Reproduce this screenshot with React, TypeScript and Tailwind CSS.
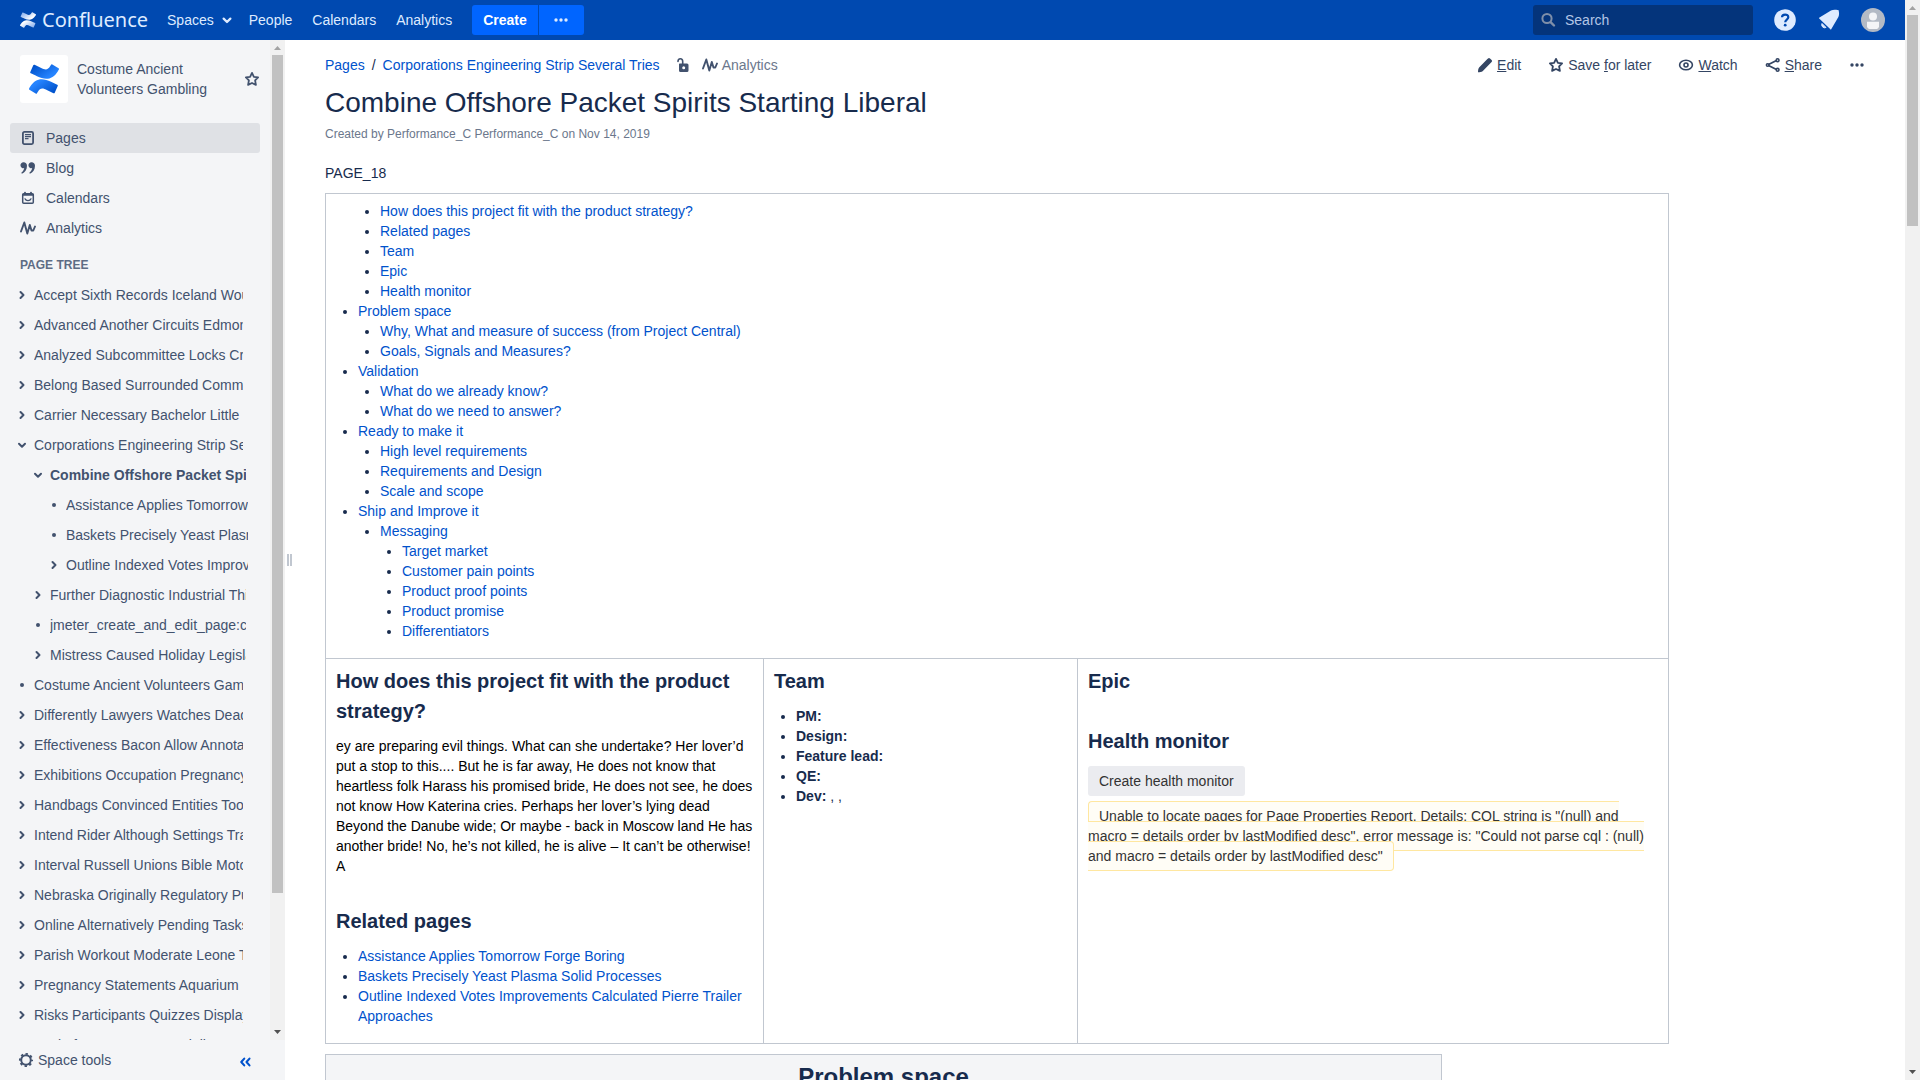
import React from "react";

type IconProps = { className?: string };

function ConfluenceMark({ id, from, to, className }: { id: string; from: string; to: string; className: string }) {
  return (
    <svg viewBox="0 0 24 24" className={className} aria-hidden="true">
      <defs>
        <linearGradient id={id + "a"} x1="0" y1="0.3" x2="0.7" y2="0.8">
          <stop offset="0" stopColor={from} />
          <stop offset="1" stopColor={to} />
        </linearGradient>
        <linearGradient id={id + "b"} x1="1" y1="0.7" x2="0.3" y2="0.2">
          <stop offset="0" stopColor={from} />
          <stop offset="1" stopColor={to} />
        </linearGradient>
      </defs>
      <path
        fill={`url(#${id}b)`}
        d="M.87 18.257c-.248.382-.53.875-.763 1.245a.764.764 0 0 0 .255 1.04l4.965 3.054a.764.764 0 0 0 1.058-.26c.199-.332.454-.763.733-1.221 1.967-3.247 3.945-2.853 7.508-1.146l4.957 2.337a.764.764 0 0 0 1.028-.382l2.364-5.346a.764.764 0 0 0-.382-1a599.851 599.851 0 0 1-4.965-2.361C10.911 10.97 5.224 11.185.87 18.257z"
      />
      <path
        fill={`url(#${id}a)`}
        d="M23.131 5.743c.249-.405.531-.875.764-1.25a.764.764 0 0 0-.256-1.034L18.675.404a.764.764 0 0 0-1.058.26c-.195.335-.451.763-.734 1.225-1.966 3.246-3.945 2.85-7.508 1.146L4.437.694a.764.764 0 0 0-1.027.382L1.046 6.422a.764.764 0 0 0 .382 1c1.039.49 3.105 1.467 4.965 2.361 6.698 3.246 12.392 3.029 16.738-4.04z"
      />
    </svg>
  );
}

function Svg({ className = "h-4 w-4", children }: { className?: string; children: React.ReactNode }) {
  return (
    <svg viewBox="0 0 16 16" className={className + " shrink-0"} fill="none" stroke="currentColor" strokeWidth="2" strokeLinecap="round" strokeLinejoin="round" aria-hidden="true">
      {children}
    </svg>
  );
}

const ChevronRight = ({ className }: IconProps) => <Svg className={className}><path d="M6.5 5l3 3-3 3" /></Svg>;
const ChevronDown = ({ className }: IconProps) => <Svg className={className}><path d="M5 6.8l3 3 3-3" /></Svg>;
const Dot = ({ className }: IconProps) => <Svg className={className}><circle cx="8" cy="8" r="2" fill="currentColor" stroke="none" /></Svg>;
const Star = ({ className }: IconProps) => (
  <Svg className={className}>
    <path strokeWidth="1.8" d="M8 1.9l1.9 3.9 4.2.6-3 3 .8 4.5L8 12l-3.900 1.900.8-4.500-3-3 4.200-.6z" />
  </Svg>
);
const Dots = ({ className }: IconProps) => (
  <Svg className={className}>
    <g fill="currentColor" stroke="none"><circle cx="3" cy="8" r="1.700" /><circle cx="8" cy="8" r="1.700" /><circle cx="13" cy="8" r="1.700" /></g>
  </Svg>
);
const Pulse = ({ className }: IconProps) => (
  <Svg className={className}>
    <path strokeWidth="1.900" d="M1 11.500L4.300 2.500l3 11 2.500-8.500 1.700 5.500 1.800 0L15 6.500" />
  </Svg>
);
const PageIcon = () => (
  <Svg>
    <rect x="2.900" y="1.900" width="10.200" height="12.200" rx="1.500" strokeWidth="1.800" />
    <path strokeWidth="1.200" strokeLinecap="butt" d="M5 4.700h6M5 6.700h6M5 8.700h3.500" />
  </Svg>
);
const Quote = () => (
  <Svg>
    <g fill="currentColor" stroke="none">
      <path d="M3.600 2.200a3 3 0 1 0 .6 5.900C4 10 3 11.600 1.300 12.800l.6 1C5 12.600 7 9.500 7 5.800 7 3.600 5.500 2.200 3.600 2.200z" />
      <path d="M11.600 2.200a3 3 0 1 0 .6 5.900c-.2 1.900-1.200 3.500-2.900 4.700l.6 1c3.100-1.200 5.100-4.300 5.100-8 0-2.200-1.500-3.600-3.400-3.600z" />
    </g>
  </Svg>
);
const CalendarIcon = () => (
  <Svg>
    <rect x="2.700" y="3.700" width="10.600" height="9.600" rx="1" strokeWidth="1.500" />
    <path d="M3 4.700h10M5 2.800v1M11 2.800v1" strokeWidth="1.900" />
    <path strokeWidth="1.300" d="M5 8.800c1 2.400 5 2.400 6 0" />
  </Svg>
);
const Unlock = () => (
  <Svg>
    <path fill="currentColor" stroke="none" fillRule="evenodd" d="M5.500 6.500h7.500a1.500 1.500 0 0 1 1.500 1.500v5.500A1.500 1.500 0 0 1 13 15H6.500A1.500 1.500 0 0 1 5 13.500V7zM9.700 9.200a1.500 1.500 0 1 0 0 3 1.500 1.500 0 0 0 0-3z" />
    <path strokeWidth="1.600" d="M4 4.500C4 .9 8.700.9 8.700 4.500v2.500" />
  </Svg>
);
const Pencil = () => (
  <Svg>
    <path fill="currentColor" stroke="none" d="M9.900 2.400l1.100-1a1.400 1.400 0 0 1 2 0l1.600 1.600a1.400 1.400 0 0 1 0 2l-1 1.100-8 8.100c-1 .9-2.800 1-4.600 1.100.1-1.900.2-3.700 1.100-4.700z" />
  </Svg>
);
const Eye = () => (
  <Svg>
    <ellipse cx="8" cy="8" rx="6.400" ry="4.800" strokeWidth="1.600" />
    <circle cx="8" cy="8" r="2" strokeWidth="1.600" />
  </Svg>
);
const ShareIcon = () => (
  <Svg>
    <path strokeWidth="1.700" d="M4 7.300l7-3.500M4 8.700l7 3.500" />
    <g strokeWidth="1.600"><circle cx="2.700" cy="8" r="1.300" /><circle cx="12.600" cy="3.200" r="1.400" /><circle cx="12.600" cy="12.800" r="1.400" /></g>
  </Svg>
);
const Gear = () => (
  <Svg>
    <circle cx="8" cy="8" r="4.800" strokeWidth="2" />
    <circle cx="8" cy="8" r="6.100" strokeWidth="1.900" strokeLinecap="butt" strokeDasharray="2.400 2.391" strokeDashoffset="1.200" />
  </Svg>
);

function ScrollBar({ thumb }: { thumb: string }) {
  return (
    <div className="flex w-[15px] shrink-0 flex-col items-center bg-[#f1f1f1]" aria-hidden="true">
      <svg viewBox="0 0 15 15" className="h-[15px] w-[15px] shrink-0"><path fill="#a3a3a3" d="M4 10h7L7.500 6z" /></svg>
      <div className={"w-[11px] bg-[#c1c1c1] " + thumb} />
      <svg viewBox="0 0 15 15" className="mt-auto h-[15px] w-[15px] shrink-0"><path fill="#505050" d="M4 5h7L7.500 9z" /></svg>
    </div>
  );
}

type Node = { text: string; icon: "right" | "down" | "dot"; level?: 1 | 2; current?: boolean };

const tree: Node[] = [
  { text: "Accept Sixth Records Iceland Would", icon: "right" },
  { text: "Advanced Another Circuits Edmonton", icon: "right" },
  { text: "Analyzed Subcommittee Locks Creek", icon: "right" },
  { text: "Belong Based Surrounded Commands", icon: "right" },
  { text: "Carrier Necessary Bachelor Little", icon: "right" },
  { text: "Corporations Engineering Strip Several Tries", icon: "down" },
  { text: "Combine Offshore Packet Spirits Starting Liberal", icon: "down", level: 1, current: true },
  { text: "Assistance Applies Tomorrow Forge Boring", icon: "dot", level: 2 },
  { text: "Baskets Precisely Yeast Plasma Solid Processes", icon: "dot", level: 2 },
  { text: "Outline Indexed Votes Improvements Calculated", icon: "right", level: 2 },
  { text: "Further Diagnostic Industrial Things", icon: "right", level: 1 },
  { text: "jmeter_create_and_edit_page:create", icon: "dot", level: 1 },
  { text: "Mistress Caused Holiday Legislation", icon: "right", level: 1 },
  { text: "Costume Ancient Volunteers Gambling", icon: "dot" },
  { text: "Differently Lawyers Watches Dead", icon: "right" },
  { text: "Effectiveness Bacon Allow Annotation", icon: "right" },
  { text: "Exhibitions Occupation Pregnancy", icon: "right" },
  { text: "Handbags Convinced Entities Tools", icon: "right" },
  { text: "Intend Rider Although Settings Travel", icon: "right" },
  { text: "Interval Russell Unions Bible Motors", icon: "right" },
  { text: "Nebraska Originally Regulatory Pump", icon: "right" },
  { text: "Online Alternatively Pending Tasks", icon: "right" },
  { text: "Parish Workout Moderate Leone Tom", icon: "right" },
  { text: "Pregnancy Statements Aquarium", icon: "right" },
  { text: "Risks Participants Quizzes Display", icon: "right" },
  { text: "Scale for Customers Socialist", icon: "right" },
];

const indent = { 0: "pl-[14px] pr-[27px]", 1: "pl-[30px] pr-6", 2: "pl-[46px] pr-[22px]" };
const treeIcons = { right: ChevronRight, down: ChevronDown, dot: Dot };

function TreeRow({ node }: { node: Node }) {
  const Icon = treeIcons[node.icon];
  return (
    <li className={"flex h-[30px] items-center gap-1 " + indent[node.level ?? 0]}>
      {node.icon === "dot" ? (
        <Icon />
      ) : (
        <button type="button" aria-label={"Toggle " + node.text}><Icon /></button>
      )}
      <a href="#" className={"min-w-0 flex-1 overflow-hidden whitespace-nowrap " + (node.current ? "font-bold" : "")}>{node.text}</a>
    </li>
  );
}

function Sidebar() {
  const nav = [
    { label: "Pages", icon: <PageIcon />, active: true },
    { label: "Blog", icon: <Quote /> },
    { label: "Calendars", icon: <CalendarIcon /> },
    { label: "Analytics", icon: <Pulse /> },
  ];
  return (
    <aside className="flex w-[285px] shrink-0 flex-col bg-[#f4f5f7] text-[#42526e]">
      <div className="flex min-h-0 flex-1">
        <div className="min-w-0 flex-1 overflow-hidden">
          <div className="flex items-center pt-[15px] pr-2.5 pl-5">
            <a href="#" aria-label="Space home" className="flex h-12 w-12 shrink-0 items-center justify-center rounded-[3px] bg-white">
              <ConfluenceMark id="space" from="#0052cc" to="#2684ff" className="h-[30px] w-[30px]" />
            </a>
            <a href="#" className="ml-[9px] w-[140px]">Costume Ancient Volunteers Gambling</a>
            <button type="button" aria-label="Add to favourites" className="ml-auto"><Star /></button>
          </div>
          <nav className="mt-5 px-2.5">
            {nav.map((item) => (
              <a key={item.label} href="#" className={"flex h-[30px] items-center gap-2.5 rounded-[3px] pl-2.5 " + (item.active ? "bg-[#dfe1e5]" : "")}>
                {item.icon}
                {item.label}
              </a>
            ))}
          </nav>
          <h2 className="mt-3 mb-[5px] pl-5 text-xs leading-5 font-bold text-[#5e6c84]">PAGE TREE</h2>
          <ul>
            {tree.map((node) => (
              <TreeRow key={node.text} node={node} />
            ))}
          </ul>
        </div>
        <ScrollBar thumb="h-[838px]" />
      </div>
      <div className="flex h-10 shrink-0 items-center justify-between pr-[34px] pl-[18px]">
        <button type="button" className="flex items-center gap-1"><Gear />Space tools</button>
        <button type="button" aria-label="Collapse sidebar" className="mt-1 text-[#0052cc]">
          <Svg className="h-3 w-3"><path strokeWidth="2.800" d="M7 3.500L3 8l4 4.500M14 3.500L10 8l4 4.500" /></Svg>
        </button>
      </div>
    </aside>
  );
}

function Header() {
  return (
    <header className="flex h-10 shrink-0 items-center bg-[#0049b0] pr-5 pl-5 text-[#deebff]">
      <a href="#" className="flex items-center gap-1.5 font-['Noto_Sans','Open_Sans',sans-serif] text-xl leading-10">
        <ConfluenceMark id="brand" from="#8fb4ee" to="#ffffff" className="h-4 w-4" />
        Confluence
      </a>
      <nav className="ml-[19px] flex items-center">
        <button type="button" className="flex items-center gap-1">Spaces<ChevronDown className="h-[18px] w-[18px]" /></button>
        <a href="#" className="ml-[13px]">People</a>
        <a href="#" className="ml-5">Calendars</a>
        <a href="#" className="ml-5">Analytics</a>
      </nav>
      <div className="ml-5 flex gap-px">
        <button type="button" className="h-[30px] rounded-l-[3px] bg-[#0065ff] px-[11px] font-bold text-white">Create</button>
        <button type="button" aria-label="Create from template" className="flex h-[30px] w-[45px] items-center justify-center rounded-r-[3px] bg-[#0065ff]">
          <Dots />
        </button>
      </div>
      <label className="ml-auto flex h-[30px] w-[220px] items-center gap-2 rounded-[3px] bg-[#04347b] px-2">
        <Svg className="h-4 w-4 text-[#7f8fa9]"><circle cx="6" cy="6.500" r="4.600" /><path strokeWidth="2.400" d="M9.800 10.300l3.200 3.200" /></Svg>
        <input type="text" aria-label="Search" placeholder="Search" className="min-w-0 flex-1 bg-transparent outline-none placeholder:text-[#b3c6e6]" />
      </label>
      <button type="button" aria-label="Help" className="ml-5">
        <svg viewBox="0 0 24 24" className="h-6 w-6" aria-hidden="true">
          <circle cx="12" cy="12" r="10.800" fill="#deebff" />
          <path d="M9 9.300c0-3.700 6.300-3.700 6.300 0 0 2.300-3.100 2.200-3.100 4.900" fill="none" stroke="#0049b0" strokeWidth="2.200" />
          <circle cx="12.200" cy="17.200" r="1.400" fill="#0049b0" />
        </svg>
      </button>
      <button type="button" aria-label="Notifications" className="ml-5">
        <svg viewBox="0 0 24 24" className="h-6 w-6" fill="#deebff" aria-hidden="true">
          <path d="M14 2.500c2-1 4.500-1 6.500-.4l1.200.1.100 1c.6 2.600.200 5.400-1.300 7.400L13.900 21.800 2.200 10.500c-.4-.4-.2-.9.300-1.100z" />
          <path d="M5 15.500a3 3 0 0 0 4 4z" stroke="#deebff" strokeWidth="1" />
        </svg>
      </button>
      <button type="button" aria-label="User menu" className="ml-5">
        <svg viewBox="0 0 24 24" className="h-6 w-6" aria-hidden="true">
          <circle cx="12" cy="12" r="12" fill="#b3bac5" />
          <circle cx="12" cy="8.500" r="4" fill="#f4f5f7" />
          <path d="M6 13.800h12v4.700a3 3 0 0 1-2 2.500H8a3 3 0 0 1-2-2.500z" fill="#f4f5f7" />
        </svg>
      </button>
    </header>
  );
}

type Entry = { text: string; children?: Entry[]; bare?: boolean };

const toc: Entry[] = [
  {
    text: "",
    bare: true,
    children: [
      { text: "How does this project fit with the product strategy?" },
      { text: "Related pages" },
      { text: "Team" },
      { text: "Epic" },
      { text: "Health monitor" },
    ],
  },
  { text: "Problem space", children: [{ text: "Why, What and measure of success (from Project Central)" }, { text: "Goals, Signals and Measures?" }] },
  { text: "Validation", children: [{ text: "What do we already know?" }, { text: "What do we need to answer?" }] },
  { text: "Ready to make it", children: [{ text: "High level requirements" }, { text: "Requirements and Design" }, { text: "Scale and scope" }] },
  {
    text: "Ship and Improve it",
    children: [
      {
        text: "Messaging",
        children: [
          { text: "Target market" },
          { text: "Customer pain points" },
          { text: "Product proof points" },
          { text: "Product promise" },
          { text: "Differentiators" },
        ],
      },
    ],
  },
];

function TocList({ entries }: { entries: Entry[] }) {
  return (
    <ul className="list-disc pl-[22px]">
      {entries.map((entry) => (
        <li key={entry.text} className={entry.bare ? "list-none" : ""}>
          {entry.text && <a href="#" className="text-[#0052cc]">{entry.text}</a>}
          {entry.children && <TocList entries={entry.children} />}
        </li>
      ))}
    </ul>
  );
}

const cell = "border border-[#c1c7d0] px-2.5 pt-[7px] pb-[17px] align-top";
const heading = "text-xl leading-[30px] font-bold";

function Content() {
  return (
    <main className="min-w-0 flex-1 overflow-hidden bg-white pr-10 pl-8 text-[#172b4d]">
      <div className="flex items-center justify-between pt-[15px]">
        <nav aria-label="Breadcrumb" className="flex items-center">
          <a href="#" className="text-[#0052cc]">Pages</a>
          <span className="mx-[7px]">/</span>
          <a href="#" className="text-[#0052cc]">Corporations Engineering Strip Several Tries</a>
          <button type="button" aria-label="Restrictions" className="ml-3.5 text-[#42526e]"><Unlock /></button>
          <a href="#" className="ml-3 flex items-center gap-1 text-[#6b778c]">
            <span className="text-[#42526e]"><Pulse /></span>
            Analytics
          </a>
        </nav>
        <div className="flex items-center gap-[27px] text-[#344563]">
          <button type="button" className="flex items-center gap-1"><Pencil /><span><u>E</u>dit</span></button>
          <button type="button" className="flex items-center gap-1"><Star /><span>Save <u>f</u>or later</span></button>
          <button type="button" className="flex items-center gap-1"><Eye /><span><u>W</u>atch</span></button>
          <button type="button" className="flex items-center gap-1"><ShareIcon /><span><u>S</u>hare</span></button>
          <button type="button" aria-label="More actions"><Dots /></button>
        </div>
      </div>
      <h1 className="mt-3 text-[28px] leading-8">Combine Offshore Packet Spirits Starting Liberal</h1>
      <p className="mt-[5px] text-xs leading-5 text-[#6b778c]">Created by Performance_C Performance_C on Nov 14, 2019</p>
      <p className="mt-[19px]">PAGE_18</p>

      <table className="mt-2.5 w-full max-w-[1344px] table-fixed border-collapse">
        <colgroup>
          <col className="w-[438px]" />
          <col className="w-[314px]" />
          <col />
        </colgroup>
        <tbody>
          <tr>
            <td colSpan={3} className={cell}><TocList entries={toc} /></td>
          </tr>
          <tr>
            <td className={cell}>
              <h2 className={heading}>How does this project fit with the product strategy?</h2>
              <p className="mt-2.5 text-black">
                ey are preparing evil things. What can she undertake? Her lover’d put a stop to this.... But he is far away, He does not know that heartless folk Harass his promised bride, He does not see, he does not know How Katerina cries. Perhaps her lover’s lying dead Beyond the Danube wide; Or maybe - back in Moscow land He has another bride! No, he’s not killed, he is alive – It can’t be otherwise! A
              </p>
              <h2 className={heading + " mt-[30px]"}>Related pages</h2>
              <ul className="mt-2.5 list-disc pl-[22px]">
                <li><a href="#" className="text-[#0052cc]">Assistance Applies Tomorrow Forge Boring</a></li>
                <li><a href="#" className="text-[#0052cc]">Baskets Precisely Yeast Plasma Solid Processes</a></li>
                <li><a href="#" className="text-[#0052cc]">Outline Indexed Votes Improvements Calculated Pierre Trailer Approaches</a></li>
              </ul>
            </td>
            <td className={cell}>
              <h2 className={heading}>Team</h2>
              <ul className="mt-2.5 list-disc pl-[22px]">
                <li><strong>PM:</strong></li>
                <li><strong>Design:</strong></li>
                <li><strong>Feature lead:</strong></li>
                <li><strong>QE:</strong></li>
                <li><strong>Dev:</strong> , ,</li>
              </ul>
            </td>
            <td className={cell}>
              <h2 className={heading}>Epic</h2>
              <h2 className={heading + " mt-[30px]"}>Health monitor</h2>
              <button type="button" className="mt-2.5 block h-[30px] rounded-[3px] bg-[#ebecf0] px-[11px] text-[#333333]">Create health monitor</button>
              <p className="mt-2.5 text-[#333333]">
                <span className="rounded border border-[#ffe7a0] bg-[#fffdf6] px-2.5 py-1.5">
                  Unable to locate pages for Page Properties Report. Details: CQL string is "(null) and macro = details order by lastModified desc". error message is: "Could not parse cql : (null) and macro = details order by lastModified desc"
                </span>
              </p>
            </td>
          </tr>
        </tbody>
      </table>

      <table className="mt-2.5 w-full max-w-[1117px] border-collapse">
        <tbody>
          <tr>
            <th className="border border-[#c1c7d0] bg-[#f4f5f7] px-2.5 pt-[7px] pb-[7px] text-2xl leading-[30px] font-bold">Problem space</th>
          </tr>
        </tbody>
      </table>
    </main>
  );
}

export default function App() {
  return (
    <div className="flex h-screen overflow-hidden font-['Liberation_Sans',Arial,sans-serif] text-sm leading-5">
      <div className="flex min-w-0 flex-1 flex-col">
        <Header />
        <div className="flex min-h-0 flex-1">
          <Sidebar />
          <div className="flex w-2 shrink-0 items-center justify-center gap-px bg-white" role="separator" aria-orientation="vertical">
            <span className="h-3 w-0.5 bg-[#c1c7d0]" />
            <span className="h-3 w-0.5 bg-[#c1c7d0]" />
          </div>
          <Content />
        </div>
      </div>
      <ScrollBar thumb="h-[211px]" />
    </div>
  );
}
